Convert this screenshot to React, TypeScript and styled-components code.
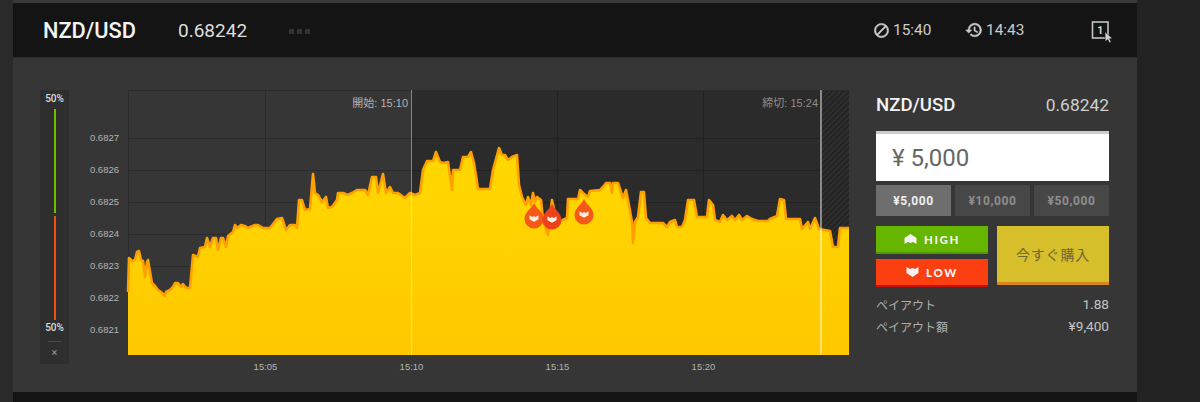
import styled, { createGlobalStyle } from "styled-components";

const GlobalStyle = createGlobalStyle`
    html, body {
        margin: 0;
        padding: 0;
        width: 1200px;
        height: 402px;
        overflow: hidden;
        background: #222222;
        font-family: Roboto, "Noto Sans CJK JP", sans-serif;
    }
`;

const Page = styled.div`
    width: 1200px;
    height: 402px;
    display: flex;
    background: linear-gradient(90deg, #2a2a2a 0, #2a2a2a 13px, #222222 13px);
`;

const Shell = styled.div`
    width: 1124px;
    margin-left: 13px;
    display: flex;
    flex-direction: column;
    background: #3a3a3a;
    padding-top: 3px;
`;

const Header = styled.header`
    height: 55px;
    flex: none;
    display: flex;
    align-items: center;
    background: #141414;
    border-bottom: 1px solid #2a2a2a;
    box-sizing: border-box;
    padding: 0 24px 0 30px;
`;

const Pair = styled.h1`
    margin: 0;
    width: 135px;
    font-size: 21.8px;
    font-weight: 500;
    color: #f4f4f4;
`;

const Rate = styled.span`
    width: 111px;
    font-size: 19px;
    color: #dddddd;
`;

const Dots = styled.div`
    display: flex;
    gap: 3px;
    margin-top: 3px;
`;

const Dot = styled.i`
    width: 5px;
    height: 5px;
    background: #333333;
`;

const Clock = styled.div<{ $width: number }>`
    display: flex;
    align-items: center;
    gap: 3px;
    width: ${(p) => p.$width}px;
    font-size: 15.4px;
    color: #cccccc;
    svg {
        fill: #cccccc;
        stroke: #cccccc;
        stroke-width: 0.8;
        flex: none;
    }
`;

const HeaderRight = styled.div`
    margin-left: auto;
    display: flex;
    align-items: center;
`;

const Panel = styled.main`
    height: 334px;
    flex: none;
    display: flex;
    background: #363636;
    box-sizing: border-box;
    padding: 32px 0 0 27px;
`;

const Sentiment = styled.aside`
    width: 29px;
    height: 274px;
    flex: none;
    display: flex;
    flex-direction: column;
    align-items: center;
    background: #2e2e2e;
`;

const Percent = styled.span<{ $top: number }>`
    margin-top: ${(p) => p.$top}px;
    font-size: 10px;
    font-weight: 500;
    line-height: 12px;
    color: #dddddd;
`;

const Bar = styled.div<{ $color: string; $top: number }>`
    width: 2px;
    height: 104px;
    margin-top: ${(p) => p.$top}px;
    background: ${(p) => p.$color};
`;

const CloseRule = styled.div`
    width: 13px;
    height: 1px;
    margin-top: 7px;
    background: #4a4a4a;
`;

const CloseMark = styled.span`
    margin-top: 5px;
    font-size: 11px;
    line-height: 12px;
    color: #999999;
`;

const ChartSvg = styled.svg`
    flex: none;
    display: block;
    margin-top: -5px;
    font-family: "Liberation Sans", "Noto Sans CJK JP", sans-serif;
`;

const AxisText = styled.text`
    font-size: 9.5px;
    fill: #b4b4b4;
`;

const EdgeLabel = styled.text<{ $dim?: boolean }>`
    font-size: 11px;
    fill: ${(p) => (p.$dim ? "#8c8c8c" : "#b4b4b4")};
    text-anchor: end;
`;

const WindowDigit = styled.text`
    font-family: Roboto, sans-serif;
    font-size: 10.5px;
    font-weight: 700;
    fill: #d8d8d8;
    text-anchor: middle;
`;

const Ticket = styled.section`
    width: 233px;
    flex: none;
    margin-left: 16px;
    display: flex;
    flex-direction: column;
`;

const TicketHead = styled.div`
    height: 30px;
    margin-bottom: 11px;
    display: flex;
    justify-content: space-between;
    align-items: center;
`;

const TicketPair = styled.span`
    font-size: 18.6px;
    font-weight: 500;
    color: #f2f2f2;
`;

const TicketRate = styled.span`
    font-size: 17.4px;
    color: #cfcfcf;
`;

const AmountInput = styled.div`
    height: 50px;
    box-sizing: border-box;
    display: flex;
    align-items: center;
    padding-left: 16px;
    background: #ffffff;
    border-top: 3px solid #cccccc;
    font-size: 24px;
    color: #666666;
`;

const Presets = styled.div`
    display: grid;
    grid-template-columns: repeat(3, 75px);
    gap: 4px;
    margin-top: 4px;
`;

const Preset = styled.button<{ $active?: boolean }>`
    height: 31px;
    border: 0;
    padding: 0;
    font-family: Roboto, sans-serif;
    font-size: 12px;
    font-weight: 700;
    letter-spacing: 0.6px;
    background: ${(p) => (p.$active ? "#6e6e6e" : "#474747")};
    color: ${(p) => (p.$active ? "#f0f0f0" : "#8e8e8e")};
`;

const Actions = styled.div`
    display: grid;
    grid-template-columns: 112px 112px;
    gap: 5px 9px;
    margin-top: 10px;
`;

const Direction = styled.button<{ $bg: string; $edge: string }>`
    height: 28px;
    box-sizing: border-box;
    border: 0;
    border-bottom: 2px solid ${(p) => p.$edge};
    padding: 0;
    display: flex;
    align-items: center;
    justify-content: center;
    gap: 7px;
    background: ${(p) => p.$bg};
    color: #f4f4f4;
    font-family: Lato, sans-serif;
    font-size: 11.5px;
    font-weight: 900;
    letter-spacing: 1.6px;
    svg {
        fill: #f4f4f4;
    }
`;

const Buy = styled.button`
    grid-column: 2;
    grid-row: 1 / span 2;
    height: 59px;
    box-sizing: border-box;
    border: 0;
    border-bottom: 3px solid #d9851c;
    padding: 0;
    background: #d6bf2a;
    color: #6f6732;
    font-family: "Noto Sans CJK JP", sans-serif;
    font-size: 14px;
    letter-spacing: 0.8px;
`;

const Payouts = styled.dl`
    margin: 6px 0 0;
`;

const PayoutRow = styled.div`
    height: 22px;
    display: flex;
    justify-content: space-between;
    align-items: center;
`;

const PayoutLabel = styled.dt`
    font-family: "Noto Sans CJK JP", sans-serif;
    font-size: 12px;
    color: #aeaeae;
`;

const PayoutValue = styled.dd`
    margin: 0;
    font-size: 13.6px;
    color: #c4c4c4;
`;

const Footer = styled.div`
    flex: 1;
    background: #141414;
`;

const price: [number, number][] = [
    [128, 292], [129, 258], [132, 261], [135, 260], [137, 252], [139, 251], [141, 260], [143, 261], [145, 277],
    [147, 262], [148, 260], [150, 272], [152, 283], [155, 286], [158, 290], [161, 292], [165, 296], [166, 292],
    [170, 290], [173, 287], [175, 283], [178, 283], [181, 287], [183, 284], [185, 287], [187, 288], [190, 288],
    [193, 255], [198, 257], [200, 248], [205, 247], [207, 238], [210, 247], [213, 238], [216, 238], [218, 250],
    [221, 238], [223, 238], [226, 247], [228, 236], [233, 232], [235, 225], [237, 228], [241, 225], [245, 226],
    [248, 228], [255, 225], [258, 225], [263, 228], [270, 228], [277, 219], [282, 218], [286, 230], [290, 225],
    [295, 225], [297, 228], [299, 200], [302, 200], [305, 210], [310, 209], [313, 174], [315, 193], [318, 195],
    [322, 202], [326, 197], [328, 208], [332, 207], [337, 200], [338, 193], [343, 193], [348, 195], [352, 193],
    [357, 190], [365, 190], [368, 195], [372, 177], [376, 177], [378, 193], [383, 174], [386, 193], [390, 187],
    [393, 193], [398, 193], [405, 198], [410, 193], [415, 195], [420, 193], [423, 170], [427, 161], [433, 161],
    [436, 152], [440, 162], [443, 163], [448, 162], [452, 190], [453, 170], [460, 170], [463, 157], [468, 157],
    [471, 152], [474, 163], [478, 189], [490, 189], [493, 170], [499, 148], [502, 155], [505, 155], [508, 160],
    [512, 157], [517, 155], [519, 185], [522, 197], [526, 205], [528, 197], [531, 205], [533, 193], [535, 202],
    [537, 197], [541, 200], [543, 220], [548, 235], [552, 200], [557, 223], [567, 218], [568, 199], [578, 199],
    [580, 190], [583, 193], [588, 197], [590, 191], [600, 190], [603, 187], [606, 183], [610, 183], [612, 193],
    [613, 183], [618, 183], [623, 198], [626, 190], [628, 200], [632, 222], [633, 243], [635, 222], [638, 217],
    [641, 192], [644, 192], [646, 218], [650, 223], [655, 223], [663, 223], [667, 227], [670, 222], [675, 220],
    [677, 227], [682, 227], [685, 220], [688, 200], [692, 200], [694, 200], [697, 217], [707, 217], [709, 200],
    [713, 205], [715, 220], [720, 222], [723, 215], [727, 220], [732, 216], [735, 220], [739, 215], [742, 220],
    [747, 216], [752, 219], [758, 221], [768, 221], [770, 219], [777, 216], [780, 199], [784, 200], [786, 219],
    [800, 219], [802, 229], [808, 222], [810, 229], [815, 218], [819, 229], [830, 231], [833, 247], [838, 247],
    [840, 228], [848, 228], [849, 228],
];

const linePath = price.map(([x, y], i) => `${i ? "L" : "M"}${x} ${y}`).join(" ");
const areaPath = `${linePath} L849 355 L128 355 Z`;

const yTicks: [string, number][] = [
    ["0.6827", 138.5], ["0.6826", 170.5], ["0.6825", 202.5], ["0.6824", 234.5],
    ["0.6823", 266.5], ["0.6822", 298.5], ["0.6821", 330.5],
];
const xTicks: [string, number][] = [["15:05", 265.5], ["15:10", 411.5], ["15:15", 557.5], ["15:20", 703.5]];

const chevronDown = "M-5 -4 L-2 -2 L0 -3 L2 -2 L5 -4 L5 1 L0 4 L-5 1 Z";

function Pin({ x, y, color }: { x: number; y: number; color: string }): JSX.Element {
    return (
        <g transform={`translate(${x} ${y})`}>
            <path d="M0 -15 C2 -10 9.5 -6 9.5 1 A9.5 9.5 0 0 1 -9.5 1 C-9.5 -6 -2 -10 0 -15 Z" fill={color} />
            <path d={chevronDown} transform="translate(0 0.5) scale(0.9 0.8)" fill="#ffeee0" />
        </g>
    );
}

function Chart(): JSX.Element {
    return (
        <ChartSvg width={791} height={296} viewBox="69 85 791 296">
            <defs>
                <linearGradient id="fill" x1="0" y1="0" x2="0" y2="1">
                    <stop offset="0" stopColor="#ffd900" />
                    <stop offset="1" stopColor="#ffc800" />
                </linearGradient>
                <pattern id="hatch" width="4" height="4" patternUnits="userSpaceOnUse" patternTransform="rotate(-45)">
                    <rect width="4" height="4" fill="#2f2f2f" />
                    <rect width="4" height="2" fill="#232323" />
                </pattern>
            </defs>

            <rect x="128" y="90" width="283" height="265" fill="#363636" />
            <rect x="411" y="90" width="410" height="265" fill="#2b2b2b" />
            <rect x="821" y="90" width="28" height="265" fill="url(#hatch)" />

            {yTicks.map(([label, y]) => (
                <g key={label}>
                    <line x1="128" x2="411" y1={y} y2={y} stroke="#2a2a2a" />
                    <line x1="411" x2="821" y1={y} y2={y} stroke="#222222" />
                    <AxisText x="119" y={y + 2.5} textAnchor="end">{label}</AxisText>
                </g>
            ))}
            {xTicks.map(([label, x]) => (
                <g key={label}>
                    <line x1={x} x2={x} y1="90" y2="355" stroke={x < 411 ? "#2a2a2a" : "#222222"} />
                    <AxisText x={x} y="370" textAnchor="middle">{label}</AxisText>
                </g>
            ))}
            <line x1="128" x2="849" y1="90.5" y2="90.5" stroke="#2a2a2a" />
            <line x1="128.5" x2="128.5" y1="90" y2="355" stroke="#2a2a2a" />

            <path d={areaPath} fill="url(#fill)" />
            <path d={linePath} fill="none" stroke="#ffa000" strokeWidth="2.6" strokeLinejoin="round" />

            <line x1="411.5" x2="411.5" y1="90" y2="355" stroke="#ffffff" strokeOpacity="0.45" />
            <line x1="821" x2="821" y1="90" y2="355" stroke="#ffffff" strokeOpacity="0.45" strokeWidth="2" />

            <EdgeLabel x="408" y="107">開始: 15:10</EdgeLabel>
            <EdgeLabel x="818" y="107" $dim>締切: 15:24</EdgeLabel>

            <Pin x={534} y={218} color="#f4591a" />
            <Pin x={584} y={214} color="#f4591a" />
            <Pin x={552} y={219} color="#ec431a" />
        </ChartSvg>
    );
}

function App(): JSX.Element {
    return (
        <Page>
            <GlobalStyle />
            <Shell>
                <Header>
                    <Pair>NZD/USD</Pair>
                    <Rate>0.68242</Rate>
                    <Dots>
                        <Dot />
                        <Dot />
                        <Dot />
                    </Dots>
                    <HeaderRight>
                        <Clock $width={92}>
                            <svg width="17" height="17" viewBox="0 0 24 24">
                                <path d="M12 2C6.48 2 2 6.48 2 12s4.48 10 10 10 10-4.48 10-10S17.52 2 12 2zM4 12c0-4.42 3.58-8 8-8 1.85 0 3.55.63 4.9 1.69L5.69 16.9C4.63 15.55 4 13.85 4 12zm8 8c-1.85 0-3.55-.63-4.9-1.69L18.31 7.1C19.37 8.45 20 10.15 20 12c0 4.42-3.58 8-8 8z" />
                            </svg>
                            15:40
                        </Clock>
                        <Clock $width={126}>
                            <svg width="18" height="18" viewBox="0 0 24 24">
                                <path d="M13 3a9 9 0 0 0-9 9H1l3.89 3.89.07.14L9 12H6c0-3.87 3.13-7 7-7s7 3.13 7 7-3.13 7-7 7c-1.93 0-3.68-.79-4.94-2.06l-1.42 1.42A8.954 8.954 0 0 0 13 21a9 9 0 0 0 0-18zm-1 5v5l4.28 2.54.72-1.21-3.5-2.08V8H12z" />
                            </svg>
                            14:43
                        </Clock>
                        <svg width="22" height="26" viewBox="0 0 22 26">
                            <rect x="1.5" y="5" width="15.5" height="16" fill="none" stroke="#c4c4c4" strokeWidth="1.6" />
                            <WindowDigit x="9.2" y="16.8">1</WindowDigit>
                            <path d="M14 15 L21.5 21.5 L18.5 21.8 L20.2 25 L18.4 25.8 L16.8 22.5 L14.3 24.5 Z" fill="#d0d0d0" stroke="#141414" strokeWidth="0.5" />
                        </svg>
                    </HeaderRight>
                </Header>
                <Panel>
                    <Sentiment>
                        <Percent $top={3}>50%</Percent>
                        <Bar $color="#6fbb00" $top={4} />
                        <Bar $color="#f2500f" $top={3} />
                        <Percent $top={2}>50%</Percent>
                        <CloseRule />
                        <CloseMark>×</CloseMark>
                    </Sentiment>
                    <Chart />
                    <Ticket>
                        <TicketHead>
                            <TicketPair>NZD/USD</TicketPair>
                            <TicketRate>0.68242</TicketRate>
                        </TicketHead>
                        <AmountInput>¥ 5,000</AmountInput>
                        <Presets>
                            <Preset $active>¥5,000</Preset>
                            <Preset>¥10,000</Preset>
                            <Preset>¥50,000</Preset>
                        </Presets>
                        <Actions>
                            <Direction $bg="#66b600" $edge="#4f9a00">
                                <svg width="13" height="10" viewBox="-6 -5 12 10">
                                    <path d="M0 -5 L6 -1 V5 L2.5 3 L0 4 L-2.5 3 L-6 5 V-1 Z" />
                                </svg>
                                HIGH
                            </Direction>
                            <Buy>今すぐ購入</Buy>
                            <Direction $bg="#fc3f10" $edge="#c81010">
                                <svg width="13" height="10" viewBox="-6 -5 12 10">
                                    <path d="M-6 -5 L-2.5 -3 L0 -4 L2.5 -3 L6 -5 V1 L0 5 L-6 1 Z" />
                                </svg>
                                LOW
                            </Direction>
                        </Actions>
                        <Payouts>
                            <PayoutRow>
                                <PayoutLabel>ペイアウト</PayoutLabel>
                                <PayoutValue>1.88</PayoutValue>
                            </PayoutRow>
                            <PayoutRow>
                                <PayoutLabel>ペイアウト額</PayoutLabel>
                                <PayoutValue>¥9,400</PayoutValue>
                            </PayoutRow>
                        </Payouts>
                    </Ticket>
                </Panel>
                <Footer />
            </Shell>
        </Page>
    );
}

export default App;
